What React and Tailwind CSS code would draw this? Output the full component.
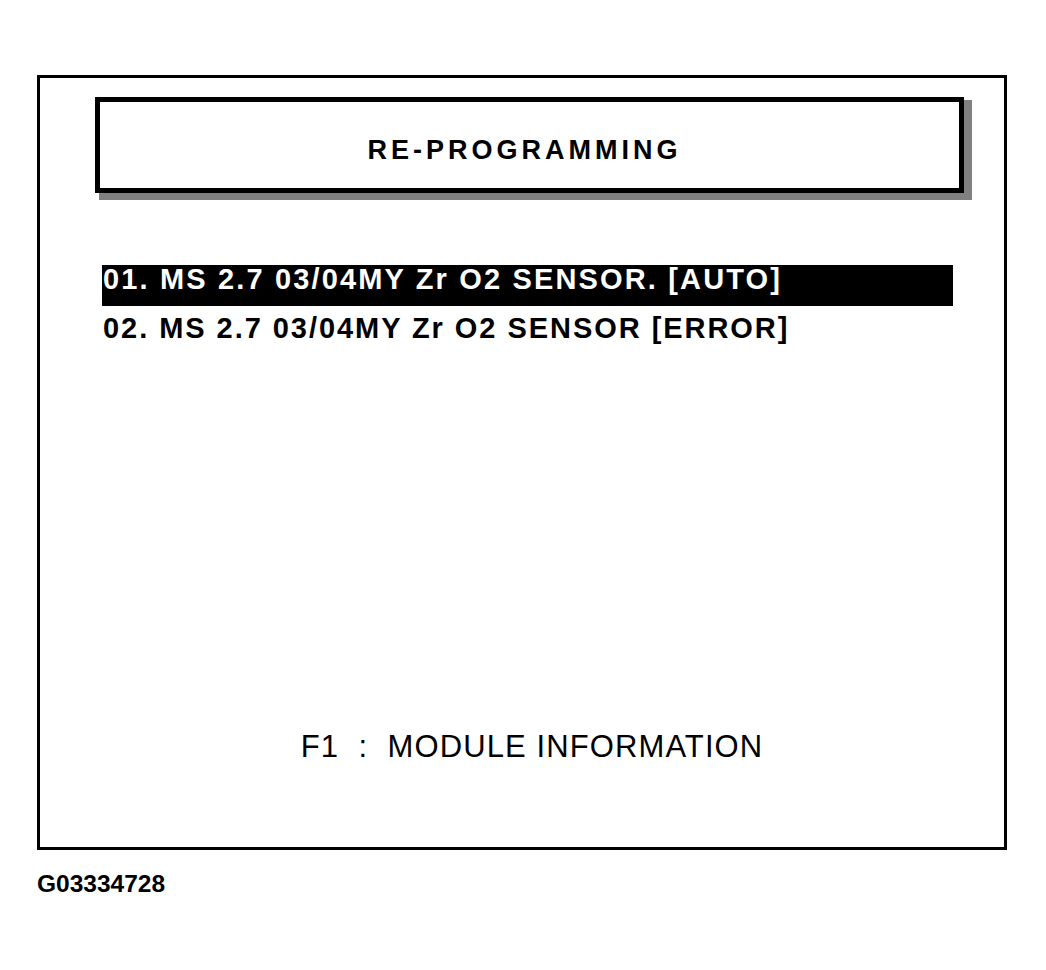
import React from 'react'

const font = { fontFamily: '"Liberation Sans", Arial, sans-serif' }

const App = () => {
  return (
    <div className="w-[1046px] h-[970px] bg-white text-black" style={font}>
      <div className="pt-[75px] pl-[37px]">
        {/* outer frame */}
        <div className="w-[970px] h-[775px] border-[3px] border-black flex flex-col">
          {/* title box */}
          <div className="ml-[55px] mt-[19px] w-[869px] h-[96px] border-[5px] border-black bg-white shadow-[6px_5px_0_2px_#808080]">
            <div className="pt-[35px] pr-[10px] text-center text-[27px] leading-none font-bold tracking-[4px]">
              RE-PROGRAMMING
            </div>
          </div>

          {/* program list */}
          <div className="mt-[72px] ml-[62px]">
            <div className="w-[851px] h-[41px] bg-black text-white text-[29px] leading-none font-bold tracking-[2.15px] pl-px">
              01. MS 2.7 03/04MY Zr O2 SENSOR. [AUTO]
            </div>
            <div className="pt-[8px] text-[29px] leading-none font-bold tracking-[1.95px] pl-px">
              02. MS 2.7 03/04MY Zr O2 SENSOR [ERROR]
            </div>
          </div>

          <div className="mt-auto mb-[85px] pl-[20px] text-center text-[31px] leading-none tracking-[1.1px] whitespace-pre">
            F1  :  MODULE INFORMATION
          </div>
        </div>

        <div className="mt-[22px] text-[24.5px] leading-none font-bold">G03334728</div>
      </div>
    </div>
  )
}

export default App
